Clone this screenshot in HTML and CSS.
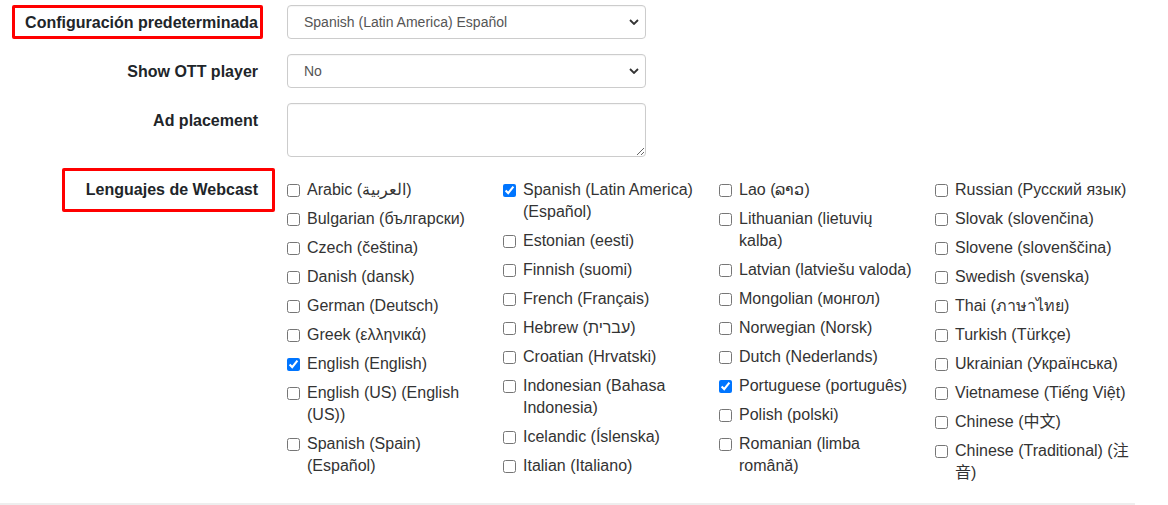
FILE: index.html
```html
<!DOCTYPE html>
<html lang="es">
<head>
    <meta charset="UTF-8">
    <meta name="viewport" content="width=device-width, initial-scale=1.0">
    <title>Webcast settings</title>
    <link rel="stylesheet" href="styles.css">
</head>
<body>

<form class="settings">
    <!-- Default language -->
    <div class="field">
        <label class="field-label marked marked-default" for="default-lang">Configuración predeterminada</label>
        <div class="field-control">
            <select id="default-lang" class="input">
                <option>Spanish (Latin America) Español</option>
            </select>
        </div>
    </div>

    <div class="field">
        <label class="field-label" for="ott-player">Show OTT player</label>
        <div class="field-control">
            <select id="ott-player" class="input">
                <option>No</option>
            </select>
        </div>
    </div>

    <div class="field">
        <label class="field-label" for="ad-placement">Ad placement</label>
        <div class="field-control">
            <textarea id="ad-placement" class="input textarea"></textarea>
        </div>
    </div>

    <!-- Webcast languages -->
    <div class="field field-langs">
        <label class="field-label marked marked-langs">Lenguajes de Webcast</label>
        <div class="lang-grid">
            <div class="lang-col">
                <label class="lang"><input type="checkbox"><span>Arabic (العربية)</span></label>
                <label class="lang"><input type="checkbox"><span>Bulgarian (български)</span></label>
                <label class="lang"><input type="checkbox"><span>Czech (čeština)</span></label>
                <label class="lang"><input type="checkbox"><span>Danish (dansk)</span></label>
                <label class="lang"><input type="checkbox"><span>German (Deutsch)</span></label>
                <label class="lang"><input type="checkbox"><span>Greek (ελληνικά)</span></label>
                <label class="lang"><input type="checkbox" checked><span>English (English)</span></label>
                <label class="lang"><input type="checkbox"><span>English (US) (English (US))</span></label>
                <label class="lang"><input type="checkbox"><span>Spanish (Spain) (Español)</span></label>
            </div>
            <div class="lang-col">
                <label class="lang"><input type="checkbox" checked><span>Spanish (Latin America) (Español)</span></label>
                <label class="lang"><input type="checkbox"><span>Estonian (eesti)</span></label>
                <label class="lang"><input type="checkbox"><span>Finnish (suomi)</span></label>
                <label class="lang"><input type="checkbox"><span>French (Français)</span></label>
                <label class="lang"><input type="checkbox"><span>Hebrew (עברית)</span></label>
                <label class="lang"><input type="checkbox"><span>Croatian (Hrvatski)</span></label>
                <label class="lang"><input type="checkbox"><span>Indonesian (Bahasa Indonesia)</span></label>
                <label class="lang"><input type="checkbox"><span>Icelandic (Íslenska)</span></label>
                <label class="lang"><input type="checkbox"><span>Italian (Italiano)</span></label>
            </div>
            <div class="lang-col">
                <label class="lang"><input type="checkbox"><span>Lao (ລາວ)</span></label>
                <label class="lang"><input type="checkbox"><span>Lithuanian (lietuvių kalba)</span></label>
                <label class="lang"><input type="checkbox"><span>Latvian (latviešu valoda)</span></label>
                <label class="lang"><input type="checkbox"><span>Mongolian (монгол)</span></label>
                <label class="lang"><input type="checkbox"><span>Norwegian (Norsk)</span></label>
                <label class="lang"><input type="checkbox"><span>Dutch (Nederlands)</span></label>
                <label class="lang"><input type="checkbox" checked><span>Portuguese (português)</span></label>
                <label class="lang"><input type="checkbox"><span>Polish (polski)</span></label>
                <label class="lang"><input type="checkbox"><span>Romanian (limba română)</span></label>
            </div>
            <div class="lang-col">
                <label class="lang"><input type="checkbox"><span>Russian (Русский язык)</span></label>
                <label class="lang"><input type="checkbox"><span>Slovak (slovenčina)</span></label>
                <label class="lang"><input type="checkbox"><span>Slovene (slovenščina)</span></label>
                <label class="lang"><input type="checkbox"><span>Swedish (svenska)</span></label>
                <label class="lang"><input type="checkbox"><span>Thai (ภาษาไทย)</span></label>
                <label class="lang"><input type="checkbox"><span>Turkish (Türkçe)</span></label>
                <label class="lang"><input type="checkbox"><span>Ukrainian (Українська)</span></label>
                <label class="lang"><input type="checkbox"><span>Vietnamese (Tiếng Việt)</span></label>
                <label class="lang"><input type="checkbox"><span>Chinese (中文)</span></label>
                <label class="lang"><input type="checkbox"><span>Chinese (Traditional) (注音)</span></label>
            </div>
        </div>
    </div>
</form>

<div class="divider"></div>

</body>
</html>
```

FILE: styles.css
```css
body {
    margin: 0;
    background: #fff;
    color: #333;
    font-family: "Liberation Sans", Arial, "Noto Sans", "Noto Sans CJK SC", sans-serif;
    font-size: 16px;
    overflow: hidden;
}
.settings {
    padding-top: 5px;
}
.field {
    display: flex;
    align-items: flex-start;
    margin-bottom: 15px;
    position: relative;
}
.field-label {
    width: 258px;
    flex-shrink: 0;
    margin-right: 29px;
    padding-top: 8px;
    line-height: 20px;
    text-align: right;
    font-weight: bold;
    font-size: 16px;
    color: #212529;
}
.field-control {
    width: 359px;
}
.input {
    display: block;
    box-sizing: border-box;
    width: 100%;
    height: 34px;
    padding: 6px 12px 6px 16px;
    border: 1px solid #ccc;
    border-radius: 4px;
    background: #fff;
    color: #555;
    font-family: inherit;
    font-size: 14px;
    box-shadow: inset 0 1px 1px rgba(0, 0, 0, 0.04);
}
select.input {
    -webkit-appearance: none;
    appearance: none;
    background-image: url("data:image/svg+xml,%3Csvg xmlns='http://www.w3.org/2000/svg' width='10' height='6' viewBox='0 0 10 6'%3E%3Cpath d='M1 1l4 4 4-4' fill='none' stroke='%23333' stroke-width='1.8'/%3E%3C/svg%3E");
    background-repeat: no-repeat;
    background-position: right 6px center;
}
.textarea {
    height: 54px;
    resize: vertical;
}

/* red annotation boxes */
.marked::after {
    content: "";
    position: absolute;
    border: 3px solid #f00;
    border-radius: 2px;
    pointer-events: none;
}
.marked-default::after {
    left: 12px;
    top: 0;
    width: 245px;
    height: 28px;
}
.marked-langs::after {
    left: 62px;
    top: -4px;
    width: 207px;
    height: 38px;
}

.field-langs {
    padding-top: 7px;
    margin-bottom: 12px;
}
.field-langs .field-label {
    padding-top: 0;
    line-height: 22px;
}
.lang-grid {
    display: grid;
    grid-template-columns: repeat(4, 196px);
    column-gap: 20px;
}
.lang {
    display: flex;
    align-items: flex-start;
    line-height: 22px;
    margin-bottom: 7px;
    color: #333;
    cursor: pointer;
}
.lang input {
    width: 13px;
    height: 13px;
    margin: 5px 7px 0 0;
    flex-shrink: 0;
}
.divider {
    width: 1135px;
    border-top: 2px solid #eee;
}
```
